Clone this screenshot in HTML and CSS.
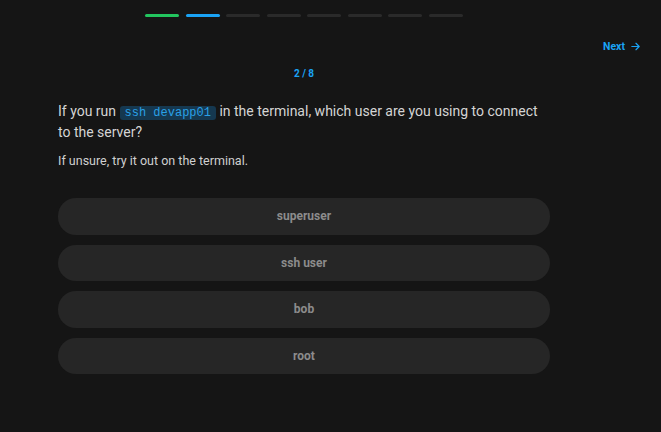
FILE: index.html
```html
<!DOCTYPE html>
<html>
<head>
<meta charset="utf-8">
<link rel="stylesheet" href="styles.css">
</head>
<body>
<div class="page">
  <div class="progress">
    <span class="seg done"></span>
    <span class="seg current"></span>
    <span class="seg"></span>
    <span class="seg"></span>
    <span class="seg"></span>
    <span class="seg"></span>
    <span class="seg"></span>
    <span class="seg"></span>
  </div>
  <div class="nav">
    <a class="next">Next
      <svg class="arrow" width="11" height="11" viewBox="0 0 24 24" fill="none" stroke="currentColor" stroke-width="2.6" stroke-linecap="round" stroke-linejoin="round"><path d="M4 12h15"/><path d="M13 5l7 7-7 7"/></svg>
    </a>
  </div>
  <div class="column">
    <div class="counter">2 / 8</div>
    <p class="question">If you run <code class="chip">ssh devapp01</code> in the terminal, which user are you using to connect to the server?</p>
    <p class="hint">If unsure, try it out on the terminal.</p>
    <div class="options">
      <button class="option">superuser</button>
      <button class="option">ssh user</button>
      <button class="option">bob</button>
      <button class="option">root</button>
    </div>
  </div>
</div>
</body>
</html>
```

FILE: styles.css
```css
html, body {
  margin: 0;
  padding: 0;
  background: #151515;
}
body {
  font-family: Roboto, "Noto Sans", sans-serif;
  color: #d4d4d4;
  width: 661px;
  height: 432px;
  overflow: hidden;
}
.page {
  padding: 14px 0 0 58px;
  width: 492px;
  position: relative;
}
.progress {
  display: flex;
  gap: 6.6px;
  justify-content: center;
  height: 3px;
}
.seg {
  width: 34px;
  height: 3px;
  border-radius: 2px;
  background: #2a2a2a;
}
.seg.done { background: #22c55e; }
.seg.current { background: #1aa3f5; }
.nav {
  position: absolute;
  top: 40px;
  left: 603px;
}
.next {
  display: flex;
  align-items: center;
  gap: 5px;
  color: #1aa3f5;
  font-size: 10.5px;
  font-weight: 700;
  line-height: 13px;
}
.arrow { display: block; }
.column {
  padding-top: 50px;
}
.counter {
  text-align: center;
  color: #1aa3f5;
  font-size: 10px;
  font-weight: 700;
  line-height: 14px;
}
.question {
  margin: 20px 0 0;
  font-size: 14px;
  line-height: 21px;
  color: #d4d4d4;
}
.chip {
  font-family: "Liberation Mono", monospace;
  font-size: 12px;
  line-height: 14px;
  display: inline-block;
  background: #153850;
  color: #2aa0e6;
  padding: 0 5px;
  border-radius: 3px;
}
.hint {
  margin: 10px 0 0;
  font-size: 12.5px;
  line-height: 16px;
  color: #d0d0d0;
}
.options {
  margin-top: 29px;
  display: flex;
  flex-direction: column;
  gap: 10px;
}
.option {
  height: 36.5px;
  border: none;
  border-radius: 18px;
  background: #262626;
  color: #8c8c8c;
  font-family: Roboto, "Noto Sans", sans-serif;
  font-size: 12px;
  font-weight: 700;
  padding: 0;
}
```
